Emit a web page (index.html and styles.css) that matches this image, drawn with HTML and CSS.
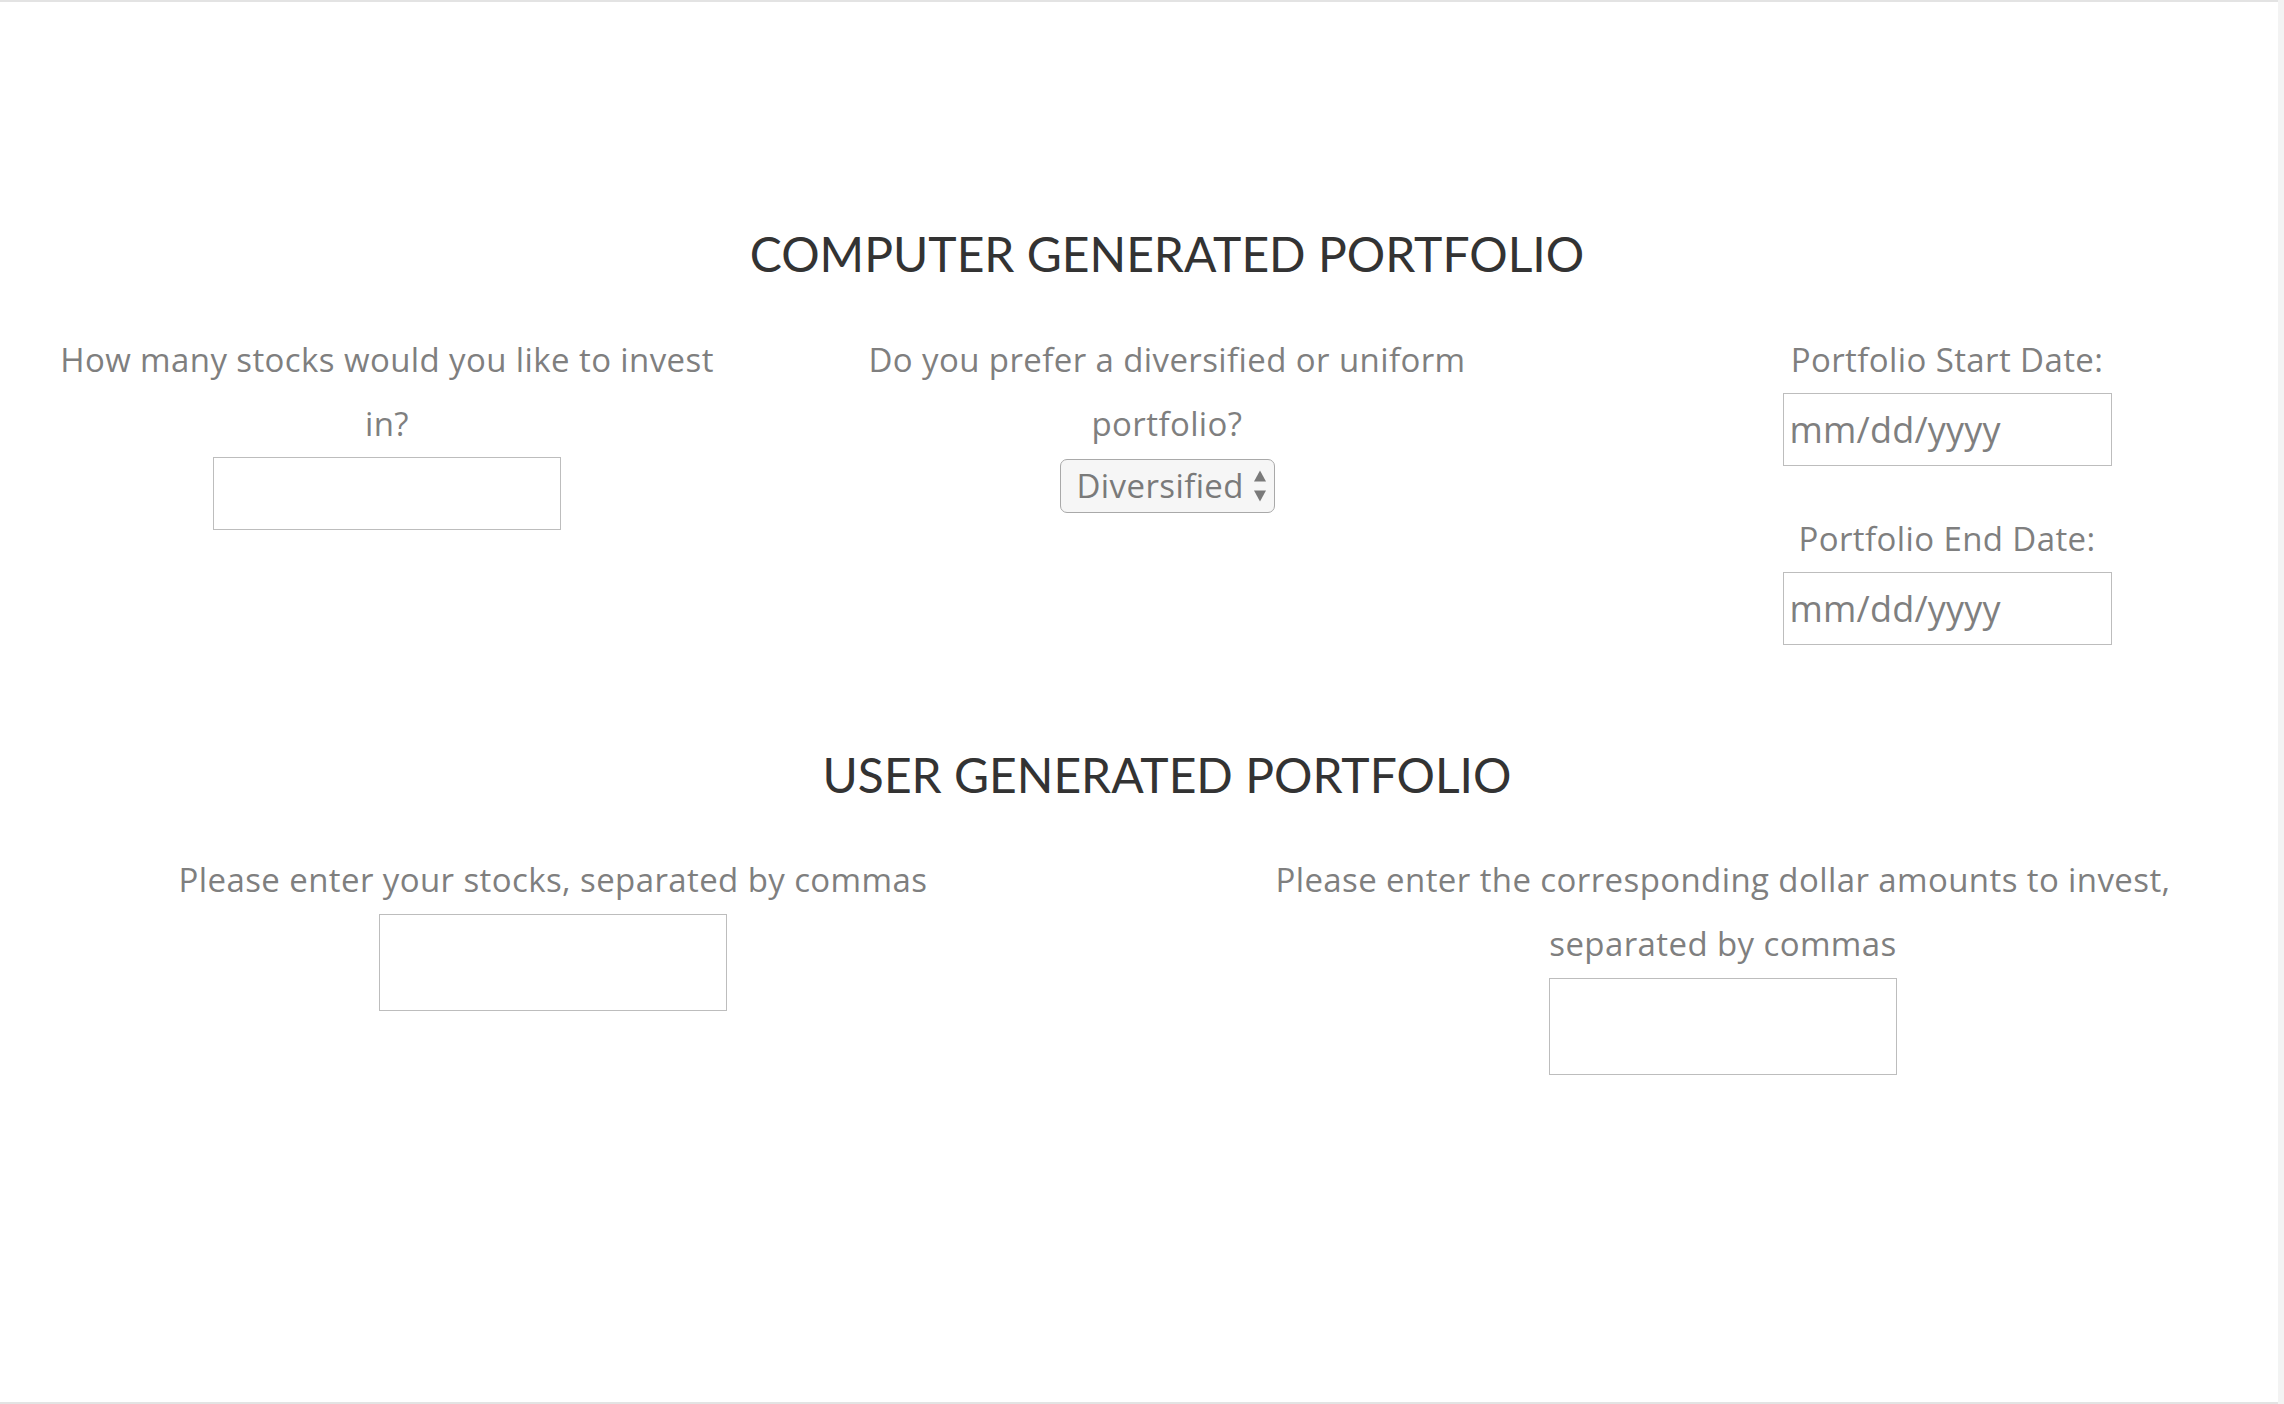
FILE: index.html
```html
<!DOCTYPE html>
<html lang="en">
<head>
<meta charset="utf-8">
<title>Portfolio</title>
<link rel="stylesheet" href="styles.css">
</head>
<body>
<div class="sheet">
  <div class="wide">
    <section class="block block-computer">
      <h2 class="title">COMPUTER GENERATED PORTFOLIO</h2>
      <div class="row row-three">
        <div class="field">
          <label class="label" for="count">How many stocks would you like to invest in?</label>
          <input class="box box-short" id="count" type="text">
        </div>
        <div class="field">
          <label class="label" for="kind">Do you prefer a diversified or uniform portfolio?</label>
          <span class="select-wrap">
            <select class="select" id="kind">
              <option>Diversified</option>
              <option>Uniform</option>
            </select>
            <svg class="select-arrows" width="12" height="32" viewBox="0 0 12 32" aria-hidden="true">
              <path d="M6 0.5 L12 11.5 L0 11.5 Z" fill="#7a7a7a"/>
              <path d="M6 31.5 L12 20.5 L0 20.5 Z" fill="#7a7a7a"/>
            </svg>
          </span>
        </div>
        <div class="field field-dates">
          <label class="label" for="start">Portfolio Start Date:</label>
          <input class="box box-date" id="start" type="text" placeholder="mm/dd/yyyy">
          <label class="label label-end" for="end">Portfolio End Date:</label>
          <input class="box box-date" id="end" type="text" placeholder="mm/dd/yyyy">
        </div>
      </div>
    </section>
    <section class="block block-user">
      <h2 class="title">USER GENERATED PORTFOLIO</h2>
      <div class="row row-two">
        <div class="field field-wide">
          <label class="label" for="stocks">Please enter your stocks, separated by commas</label>
          <input class="box box-tall" id="stocks" type="text">
        </div>
        <div class="field field-wide">
          <label class="label" for="amounts">Please enter the corresponding dollar amounts to invest, separated by commas</label>
          <input class="box box-tall" id="amounts" type="text">
        </div>
      </div>
    </section>
  </div>
</div>
</body>
</html>
```

FILE: styles.css
```css
html, body {
  margin: 0;
  padding: 0;
}

body {
  background: #f3f3f3;
  width: 2284px;
  height: 1404px;
  overflow: hidden;
}

.sheet {
  width: 2278px;
  height: 1404px;
  box-sizing: border-box;
  background: #ffffff;
  border-top: 2px solid #e3e3e3;
  border-bottom: 2px solid #e3e3e3;
  overflow: hidden;
  padding-top: 223px;
}

.wide {
  width: 2340px;
  margin-left: -3px;
}

.title {
  margin: 0;
  font-family: "Lato", "Open Sans", sans-serif;
  font-weight: 400;
  font-size: 48px;
  line-height: 1.2;
  color: #333333;
  text-align: center;
}

.block-user {
  margin-top: 101px;
}

.row {
  display: grid;
  margin-top: 41px;
}

.row-three {
  grid-template-columns: 780px 780px 780px;
}

.row-two {
  grid-template-columns: 1170px 1170px;
  margin-left: -29px;
}

.field {
  display: flex;
  flex-direction: column;
  align-items: center;
  padding: 0 50px;
  text-align: center;
}

.field-wide {
  padding: 0 110px;
}

.label {
  display: block;
  padding-top: 4px;
  font-family: "Open Sans", "Liberation Sans", sans-serif;
  font-size: 33px;
  letter-spacing: 0.4px;
  line-height: 64px;
  color: #7f7f7f;
}

.label-end {
  margin-top: 37px;
}

.box {
  display: block;
  box-sizing: border-box;
  margin: 1px 0 0 0;
  width: 348px;
  height: 73px;
  border: 1px solid #bdbdbd;
  border-radius: 0;
  background: #ffffff;
  padding: 0 6px;
  font-family: "Open Sans", "Liberation Sans", sans-serif;
  font-size: 33px;
  color: #7f7f7f;
  outline: none;
}

.box-tall {
  height: 97px;
  margin-top: 2px;
}

.box-date {
  width: 329px;
  font-size: 36px;
  letter-spacing: 0.2px;
}

.box-date::placeholder {
  color: #7f7f7f;
  opacity: 1;
}

.select-wrap {
  position: relative;
  display: block;
  margin-top: 3px;
  width: 215px;
  height: 54px;
}

.select {
  appearance: none;
  -webkit-appearance: none;
  box-sizing: border-box;
  width: 215px;
  height: 54px;
  margin: 0;
  padding: 0 0 0 16px;
  border: 1.5px solid #a9a9a9;
  border-radius: 7px;
  background: #f6f6f6;
  font-family: "Open Sans", "Liberation Sans", sans-serif;
  font-size: 33px;
  letter-spacing: 0.4px;
  color: #7a7a7a;
  text-align: left;
  outline: none;
}

.select-arrows {
  position: absolute;
  right: 9px;
  top: 11px;
  pointer-events: none;
}
```
